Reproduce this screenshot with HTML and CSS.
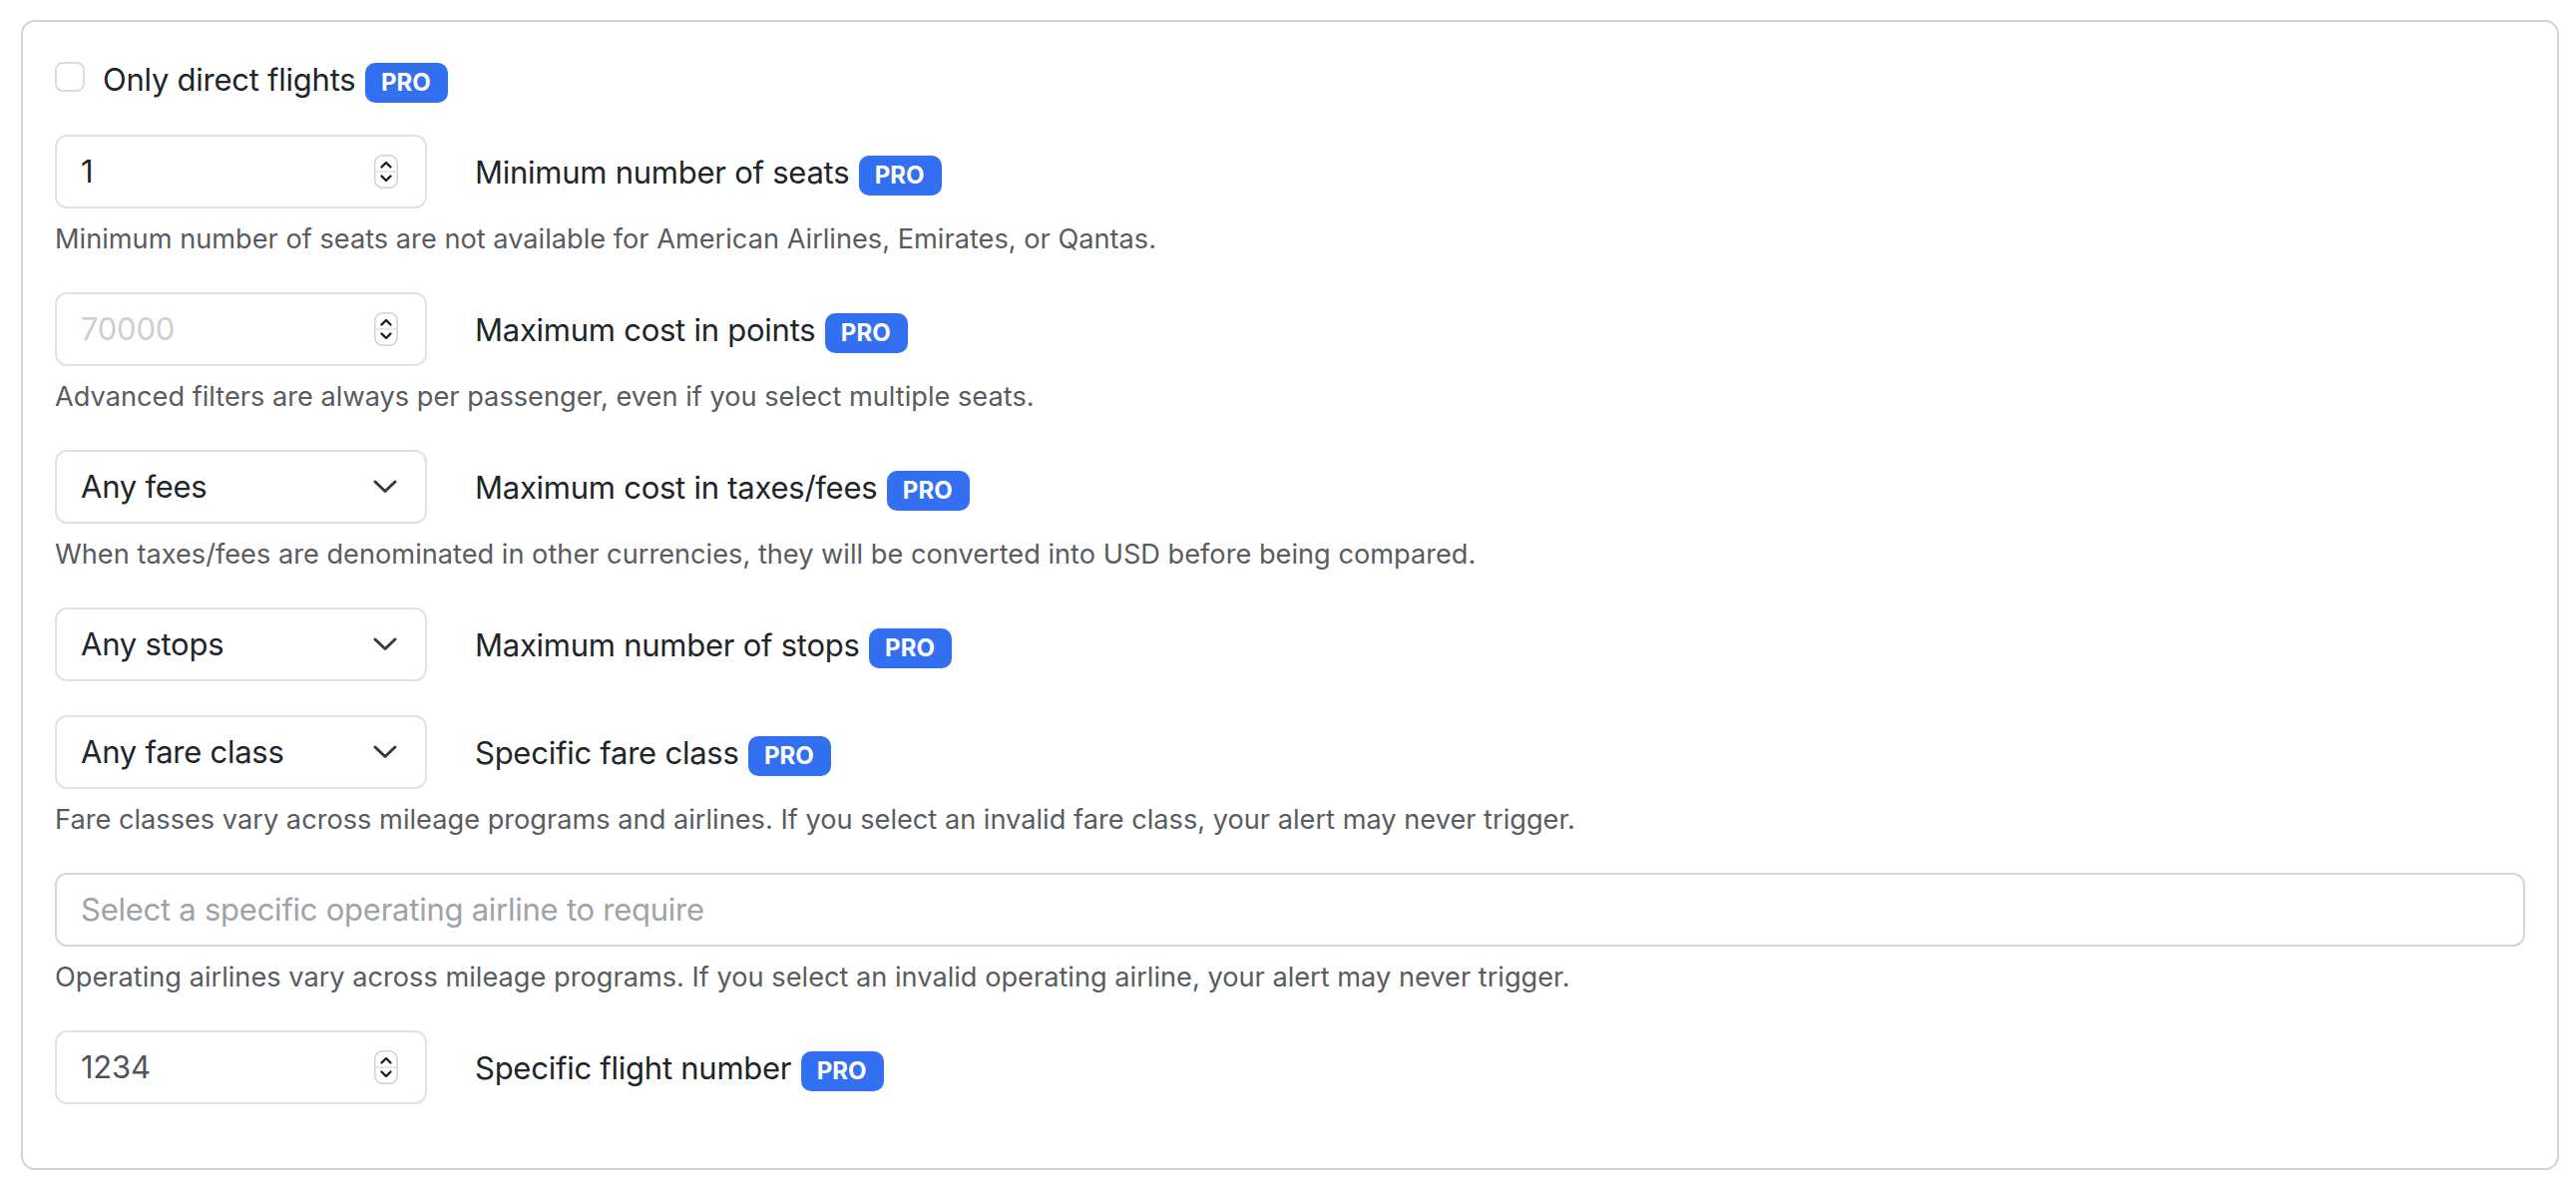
FILE: index.html
```html
<!DOCTYPE html>
<html lang="en">
<head>
<meta charset="utf-8">
<title>Alert filters</title>
<link rel="stylesheet" href="styles.css">
</head>
<body>
<form class="card">
  <div class="check-row">
    <span class="checkbox"></span>
    <span class="label">Only direct flights <span class="badge">PRO</span></span>
  </div>

  <div class="group">
    <div class="field-row">
      <div class="control">
        <span class="value">1</span>
        <svg class="spin" width="24" height="34" viewBox="0 0 24 34"><rect x="0.75" y="0.75" width="22.5" height="32.5" rx="8" fill="#fff" stroke="#d2d2d2" stroke-width="1.5"/><line x1="1" y1="17" x2="23" y2="17" stroke="#e2e2e2" stroke-width="1.5"/><path d="M7.5 12.5 L12 8 L16.5 12.5" fill="none" stroke="#1e1e1e" stroke-width="2.4" stroke-linecap="round" stroke-linejoin="round"/><path d="M7.5 21.5 L12 26 L16.5 21.5" fill="none" stroke="#1e1e1e" stroke-width="2.4" stroke-linecap="round" stroke-linejoin="round"/></svg>
      </div>
      <span class="label">Minimum number of seats <span class="badge">PRO</span></span>
    </div>
    <p class="help">Minimum number of seats are not available for American Airlines, Emirates, or Qantas.</p>
  </div>

  <div class="group">
    <div class="field-row">
      <div class="control">
        <span class="value placeholder-light">70000</span>
        <svg class="spin" width="24" height="34" viewBox="0 0 24 34"><rect x="0.75" y="0.75" width="22.5" height="32.5" rx="8" fill="#fff" stroke="#d2d2d2" stroke-width="1.5"/><line x1="1" y1="17" x2="23" y2="17" stroke="#e2e2e2" stroke-width="1.5"/><path d="M7.5 12.5 L12 8 L16.5 12.5" fill="none" stroke="#1e1e1e" stroke-width="2.4" stroke-linecap="round" stroke-linejoin="round"/><path d="M7.5 21.5 L12 26 L16.5 21.5" fill="none" stroke="#1e1e1e" stroke-width="2.4" stroke-linecap="round" stroke-linejoin="round"/></svg>
      </div>
      <span class="label">Maximum cost in points <span class="badge">PRO</span></span>
    </div>
    <p class="help">Advanced filters are always per passenger, even if you select multiple seats.</p>
  </div>

  <div class="group">
    <div class="field-row">
      <div class="control select">
        <span class="value">Any fees</span>
        <svg class="chev" width="24" height="14" viewBox="0 0 24 14"><path d="M2 2 L12 11.5 L22 2" fill="none" stroke="#343a40" stroke-width="3" stroke-linecap="round" stroke-linejoin="round"/></svg>
      </div>
      <span class="label">Maximum cost in taxes/fees <span class="badge">PRO</span></span>
    </div>
    <p class="help">When taxes/fees are denominated in other currencies, they will be converted into USD before being compared.</p>
  </div>

  <div class="group">
    <div class="field-row">
      <div class="control select">
        <span class="value">Any stops</span>
        <svg class="chev" width="24" height="14" viewBox="0 0 24 14"><path d="M2 2 L12 11.5 L22 2" fill="none" stroke="#343a40" stroke-width="3" stroke-linecap="round" stroke-linejoin="round"/></svg>
      </div>
      <span class="label">Maximum number of stops <span class="badge">PRO</span></span>
    </div>
  </div>

  <div class="group">
    <div class="field-row">
      <div class="control select">
        <span class="value">Any fare class</span>
        <svg class="chev" width="24" height="14" viewBox="0 0 24 14"><path d="M2 2 L12 11.5 L22 2" fill="none" stroke="#343a40" stroke-width="3" stroke-linecap="round" stroke-linejoin="round"/></svg>
      </div>
      <span class="label">Specific fare class <span class="badge">PRO</span></span>
    </div>
    <p class="help">Fare classes vary across mileage programs and airlines. If you select an invalid fare class, your alert may never trigger.</p>
  </div>

  <div class="group">
    <div class="control wide">
      <span class="value placeholder">Select a specific operating airline to require</span>
    </div>
    <p class="help">Operating airlines vary across mileage programs. If you select an invalid operating airline, your alert may never trigger.</p>
  </div>

  <div class="group">
    <div class="field-row">
      <div class="control">
        <span class="value muted">1234</span>
        <svg class="spin" width="24" height="34" viewBox="0 0 24 34"><rect x="0.75" y="0.75" width="22.5" height="32.5" rx="8" fill="#fff" stroke="#d2d2d2" stroke-width="1.5"/><line x1="1" y1="17" x2="23" y2="17" stroke="#e2e2e2" stroke-width="1.5"/><path d="M7.5 12.5 L12 8 L16.5 12.5" fill="none" stroke="#1e1e1e" stroke-width="2.4" stroke-linecap="round" stroke-linejoin="round"/><path d="M7.5 21.5 L12 26 L16.5 21.5" fill="none" stroke="#1e1e1e" stroke-width="2.4" stroke-linecap="round" stroke-linejoin="round"/></svg>
      </div>
      <span class="label">Specific flight number <span class="badge">PRO</span></span>
    </div>
  </div>
</form>
</body>
</html>
```

FILE: styles.css
```css
html, body {
  background: #ffffff;
}

body {
  margin: 20px 17px 0 21px;
  font-family: Inter, "Noto Sans", "Liberation Sans", sans-serif;
  color: #212529;
}

.card {
  border: 2px solid #d4d4d4;
  border-radius: 14px;
  padding: 31px 32px 64px;
  display: flex;
  flex-direction: column;
  gap: 34px;
}

.check-row {
  display: flex;
  align-items: flex-start;
  gap: 18px;
  height: 48px;
}

.checkbox {
  width: 30px;
  height: 30px;
  margin-top: 9px;
  box-sizing: border-box;
  border: 2px solid #dadde2;
  border-radius: 8px;
  background: #fff;
  flex: none;
}

.label {
  font-size: 31px;
  letter-spacing: -0.25px;
  line-height: 48px;
  padding-top: 2px;
  white-space: nowrap;
}

.check-row .label {
  padding-top: 3px;
}

.badge {
  display: inline-block;
  font-size: 24px;
  font-weight: 700;
  letter-spacing: 0;
  line-height: 1;
  padding: 8px 17px 8px 16px;
  margin-left: 1px;
  border-radius: 10px;
  background: #3370f1;
  color: #ffffff;
}

.group {
  display: flex;
  flex-direction: column;
}

.field-row {
  display: flex;
  align-items: center;
  gap: 48px;
}

.control {
  width: 373px;
  height: 74px;
  box-sizing: border-box;
  border: 2px solid #dee2e6;
  border-radius: 12px;
  padding: 0 27px 0 24px;
  display: flex;
  align-items: center;
  justify-content: space-between;
  flex: none;
  background: #fff;
}

.control.select {
  padding-right: 28px;
}

.control.wide {
  width: 100%;
  border-color: #d3d7dc;
}

.value {
  font-size: 31px;
  letter-spacing: -0.25px;
  line-height: 48px;
  color: #212529;
}

.placeholder-light {
  color: #cfcfcf;
}

.placeholder {
  color: #a0a3a6;
}

.muted {
  color: #505458;
}

.spin,
.chev {
  flex: none;
  display: block;
}

.help {
  margin: 12px 0 0;
  font-size: 27.2px;
  line-height: 38px;
  color: #595c5f;
}
```
